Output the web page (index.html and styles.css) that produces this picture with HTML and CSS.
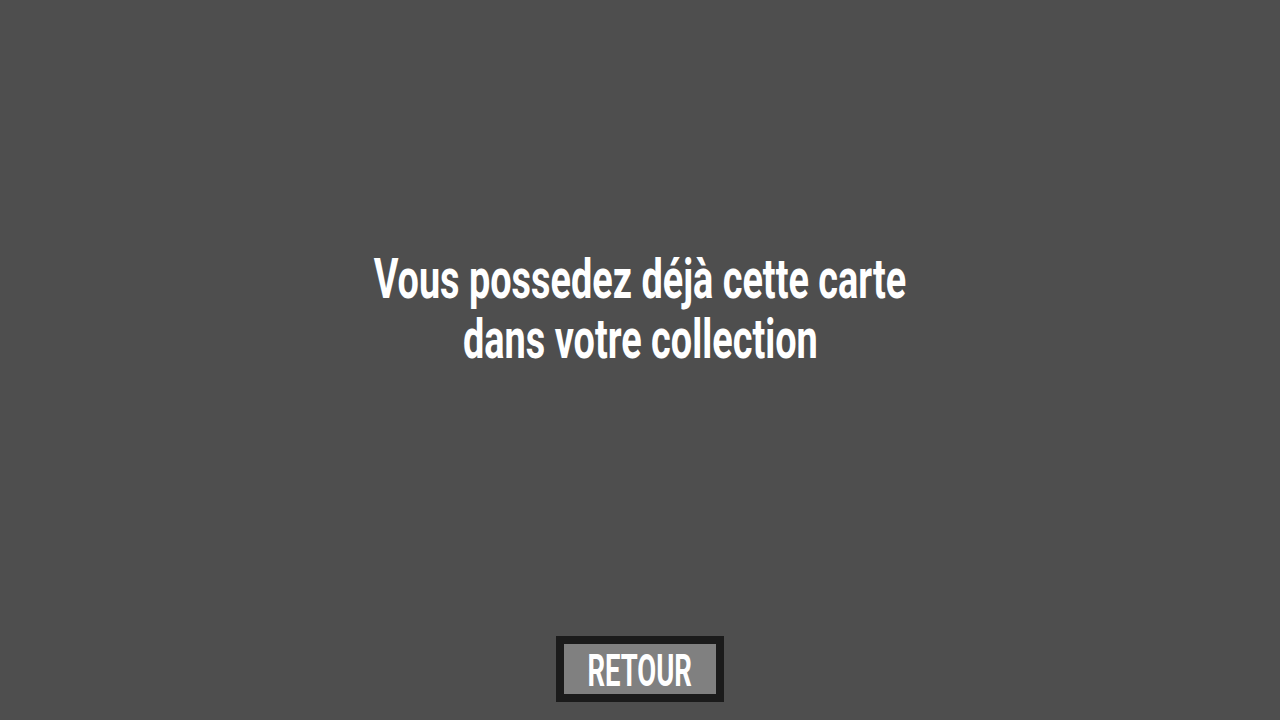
FILE: index.html
```html
<!DOCTYPE html>
<html lang="fr">
<head>
<meta charset="utf-8">
<title>Carte déjà possédée</title>
<link rel="stylesheet" href="styles.css">
</head>
<body>
<main class="screen">
  <section class="message">
    <p class="line"><span class="squeeze">Vous possedez déjà cette carte</span></p>
    <p class="line"><span class="squeeze">dans votre collection</span></p>
  </section>
  <button class="back" type="button"><span class="back-inner"><span class="squeeze squeeze-btn">RETOUR</span></span></button>
</main>
</body>
</html>
```
FILE: styles.css
```css
html, body {
  margin: 0;
  padding: 0;
  background: #4e4e4e;
}
.screen {
  width: 1280px;
  height: 720px;
  display: flex;
  flex-direction: column;
  align-items: center;
  font-family: Roboto, "Liberation Sans", sans-serif;
  font-weight: 700;
  color: #ffffff;
}
.message {
  margin-top: 249px;
  flex: 1;
  text-align: center;
}
.line {
  margin: 0;
  font-size: 56px;
  line-height: 60px;
  white-space: nowrap;
}
.squeeze {
  display: inline-block;
  transform: scaleX(0.676);
  transform-origin: center;
}
.squeeze-btn {
  transform: scaleX(0.61);
}
.back {
  margin: 0 0 18px 0;
  padding: 0;
  width: 168px;
  height: 66px;
  border: 8px solid #1b1b1b;
  background: #808080;
  box-sizing: border-box;
  font: inherit;
  color: #ffffff;
  cursor: pointer;
  display: flex;
  justify-content: center;
}
.back-inner {
  font-size: 45px;
  line-height: 50px;
  padding-top: 2px;
  white-space: nowrap;
}
```
